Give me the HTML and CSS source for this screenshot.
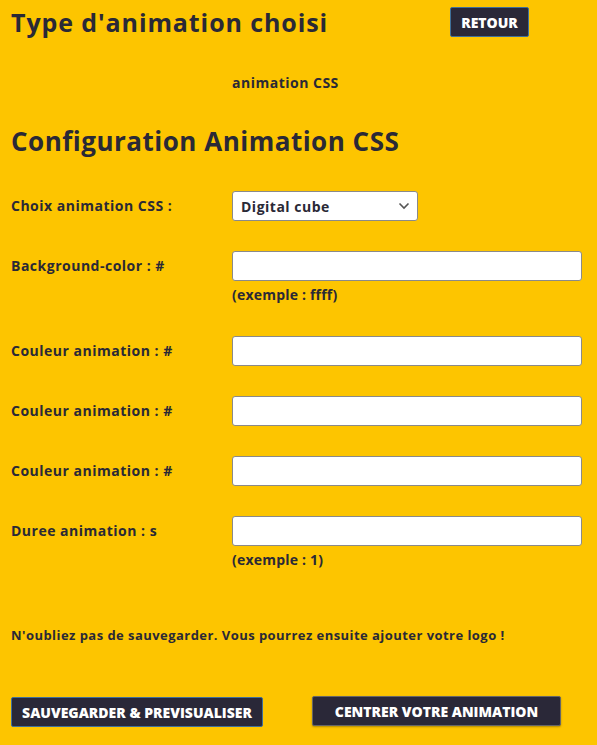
FILE: index.html
```html
<!DOCTYPE html>
<html lang="fr">
<head>
<meta charset="utf-8">
<title>Configuration Animation CSS</title>
<link rel="stylesheet" href="styles.css">
</head>
<body>
<div class="page">
  <header class="top">
    <h1 class="title">Type d'animation choisi</h1>
    <button class="btn btn-retour" type="button">RETOUR</button>
  </header>
  <div class="row chosen">
    <span class="label"></span>
    <span class="chosen-value">animation CSS</span>
  </div>
  <h2 class="subtitle">Configuration Animation CSS</h2>
  <form class="form">
    <div class="row">
      <label class="label">Choix animation CSS :</label>
      <div class="select-wrap">
        <select class="select"><option>Digital cube</option></select>
        <svg class="chev" width="12" height="8" viewBox="0 0 12 8"><path d="M1.5 1.5 L6 6 L10.5 1.5" fill="none" stroke="#555" stroke-width="1.6"/></svg>
      </div>
    </div>
    <div class="row">
      <label class="label">Background-color : #</label>
      <div class="field">
        <input class="input" type="text">
        <span class="hint">(exemple : ffff)</span>
      </div>
    </div>
    <div class="row after-hint">
      <label class="label">Couleur animation : #</label>
      <div class="field"><input class="input" type="text"></div>
    </div>
    <div class="row">
      <label class="label">Couleur animation : #</label>
      <div class="field"><input class="input" type="text"></div>
    </div>
    <div class="row">
      <label class="label">Couleur animation : #</label>
      <div class="field"><input class="input" type="text"></div>
    </div>
    <div class="row">
      <label class="label">Duree animation : s</label>
      <div class="field">
        <input class="input" type="text">
        <span class="hint">(exemple : 1)</span>
      </div>
    </div>
    <p class="note">N'oubliez pas de sauvegarder. Vous pourrez ensuite ajouter votre logo !</p>
    <div class="actions">
      <button class="btn btn-save" type="button">SAUVEGARDER &amp; PREVISUALISER</button>
      <button class="btn btn-center" type="button">CENTRER VOTRE ANIMATION</button>
    </div>
  </form>
</div>
</body>
</html>
```
FILE: styles.css
```css
html, body {
  margin: 0;
  padding: 0;
  background: #fdc500;
}
body {
  font-family: "Open Sans", "Liberation Sans", sans-serif;
  color: #2a2936;
  height: 745px;
}
.page {
  padding: 0 11px;
}
.top {
  display: flex;
  align-items: flex-start;
  justify-content: space-between;
  padding-right: 57px;
}
.title {
  margin: 7px 0 0;
  font-size: 25px;
  font-weight: 700;
  line-height: 31px;
  letter-spacing: 0.9px;
}
.btn {
  font-family: "Open Sans", "Liberation Sans", sans-serif;
  font-weight: 800;
  color: #fff;
  background: #2a2838;
  border-radius: 2px;
  cursor: pointer;
  font-size: 14px;
  padding: 0;
  height: 30px;
}
.btn-retour {
  margin-top: 7px;
  width: 79px;
  border: 1px solid #3f6f9a;
}
.row {
  display: flex;
  align-items: flex-start;
  margin-top: 30px;
}
.row.after-hint {
  margin-top: 32px;
}
.label {
  width: 221px;
  flex: none;
  font-size: 14px;
  font-weight: 700;
  line-height: 30px;
  letter-spacing: 0.5px;
}
.chosen-value {
  font-size: 14px;
  font-weight: 700;
  line-height: 30px;
  letter-spacing: 0.5px;
}
.subtitle {
  margin: 26px 0 0;
  font-size: 26px;
  font-weight: 700;
  line-height: 34px;
  letter-spacing: 0.5px;
}
.form > .row:first-child {
  margin-top: 33px;
}
.select-wrap {
  position: relative;
  width: 186px;
  height: 30px;
}
.select {
  appearance: none;
  -webkit-appearance: none;
  width: 186px;
  height: 30px;
  box-sizing: border-box;
  border: 1px solid #8a8a8a;
  border-radius: 3px;
  background: #fff;
  font-family: "Open Sans", "Liberation Sans", sans-serif;
  font-size: 14px;
  font-weight: 700;
  letter-spacing: 0.5px;
  color: #2a2936;
  padding: 0 8px;
}
.chev {
  position: absolute;
  right: 8px;
  top: 11px;
  pointer-events: none;
}
.field {
  display: flex;
  flex-direction: column;
}
.input {
  width: 350px;
  height: 30px;
  box-sizing: border-box;
  border: 1px solid #8a8a8a;
  border-radius: 3px;
  background: #fff;
  margin: 0;
}
.hint {
  margin-top: 5px;
  font-size: 14px;
  font-weight: 700;
  line-height: 18px;
  letter-spacing: 0.2px;
}
.note {
  margin: 57px 0 0;
  font-size: 13px;
  font-weight: 700;
  line-height: 18px;
  letter-spacing: 0.45px;
}
.actions {
  display: flex;
  align-items: flex-start;
  gap: 49px;
  margin-top: 53px;
}
.btn-save {
  width: 252px;
  border: 1px solid #3f6f9a;
}
.btn-center {
  width: 249px;
  border: 1px solid #666;
  margin-top: -1px;
  box-shadow: 0 1px 2px rgba(0,0,0,0.3);
}
```
